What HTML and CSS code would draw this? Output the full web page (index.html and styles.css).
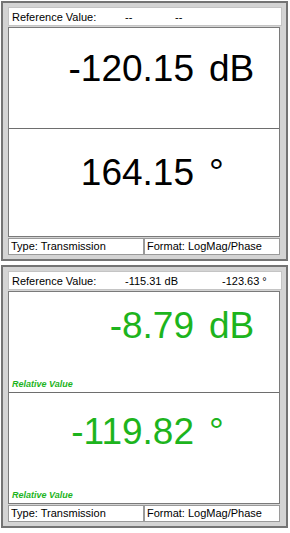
FILE: index.html
```html
<!DOCTYPE html>
<html lang="en">
<head>
    <meta charset="UTF-8">
    <meta name="viewport" content="width=device-width, initial-scale=1.0">
    <title>Marker Readout</title>
    <link rel="stylesheet" href="styles.css">
</head>
<body>

    <!-- Absolute readout -->
    <div class="panel">
        <div class="ref-bar">
            <span class="ref-label">Reference Value:</span>
            <span class="ref-mag">--</span>
            <span class="ref-phase">--</span>
        </div>
        <div class="readout">
            <div class="half half-top">
                <div class="value"><span class="num">-120.15</span><span class="unit">dB</span></div>
            </div>
            <div class="half half-bottom">
                <div class="value"><span class="num">164.15</span><span class="unit">&deg;</span></div>
            </div>
        </div>
        <div class="status">
            <div class="status-cell">Type: Transmission</div>
            <div class="status-cell">Format: LogMag/Phase</div>
        </div>
    </div>

    <!-- Relative readout -->
    <div class="panel panel-rel">
        <div class="ref-bar">
            <span class="ref-label">Reference Value:</span>
            <span class="ref-mag ref-mag-wide">-115.31 dB</span>
            <span class="ref-phase">-123.63 &deg;</span>
        </div>
        <div class="readout">
            <div class="half half-top">
                <div class="value"><span class="num">-8.79</span><span class="unit">dB</span></div>
                <div class="rel-label">Relative Value</div>
            </div>
            <div class="half half-bottom">
                <div class="value"><span class="num">-119.82</span><span class="unit">&deg;</span></div>
                <div class="rel-label">Relative Value</div>
            </div>
        </div>
        <div class="status">
            <div class="status-cell">Type: Transmission</div>
            <div class="status-cell">Format: LogMag/Phase</div>
        </div>
    </div>

</body>
</html>
```

FILE: styles.css
```css
/* General Styles */
* {
    box-sizing: border-box;
}
body {
    font-family: "Liberation Sans", Arial, sans-serif;
    margin: 0;
    padding: 1px 0 0 1px;
    background-color: #fff;
    color: #000;
}

/* Panel frame */
.panel {
    width: 287px;
    border: 2px solid #747474;
    background-color: #d4d4d4;
    padding: 4px 6px 4px 5px;
    margin-bottom: 4px;
}

/* Reference bar */
.ref-bar {
    display: flex;
    align-items: center;
    height: 19px;
    margin-right: -2px;
    padding-left: 3px;
    background: #fff;
    border: 1px solid #c4c4c4;
    font-size: 11px;
}
.ref-label {
    width: 113px;
}
.ref-mag {
    width: 50px;
}
.ref-mag-wide {
    width: 97px;
}

/* Big readout */
.readout {
    margin-top: 1px;
    background: #fff;
    border: 1px solid #7a7a7a;
}
.half {
    display: flex;
    flex-direction: column;
}
.half-top {
    height: 101px;
    border-bottom: 1px solid #6e6e6e;
}
.half-bottom {
    height: 107px;
}
.panel-rel .half-bottom {
    height: 110px;
}
.value {
    flex: 1;
    display: grid;
    grid-template-columns: 185px auto;
    align-content: center;
    padding-bottom: 20px;
    font-size: 37px;
    line-height: 1;
}
.num {
    text-align: right;
}
.unit {
    padding-left: 15px;
}
.panel-rel .value {
    color: #1db41d;
}
.rel-label {
    padding: 0 0 3px 3px;
    font-size: 9px;
    font-style: italic;
    font-weight: bold;
    color: #1db41d;
}

/* Status row */
.status {
    display: flex;
    margin-top: 1px;
}
.status-cell {
    flex: 1;
    height: 17px;
    padding-left: 2px;
    background: #fff;
    border: 1px solid #9a9a9a;
    font-size: 11px;
    line-height: 15px;
}
```
